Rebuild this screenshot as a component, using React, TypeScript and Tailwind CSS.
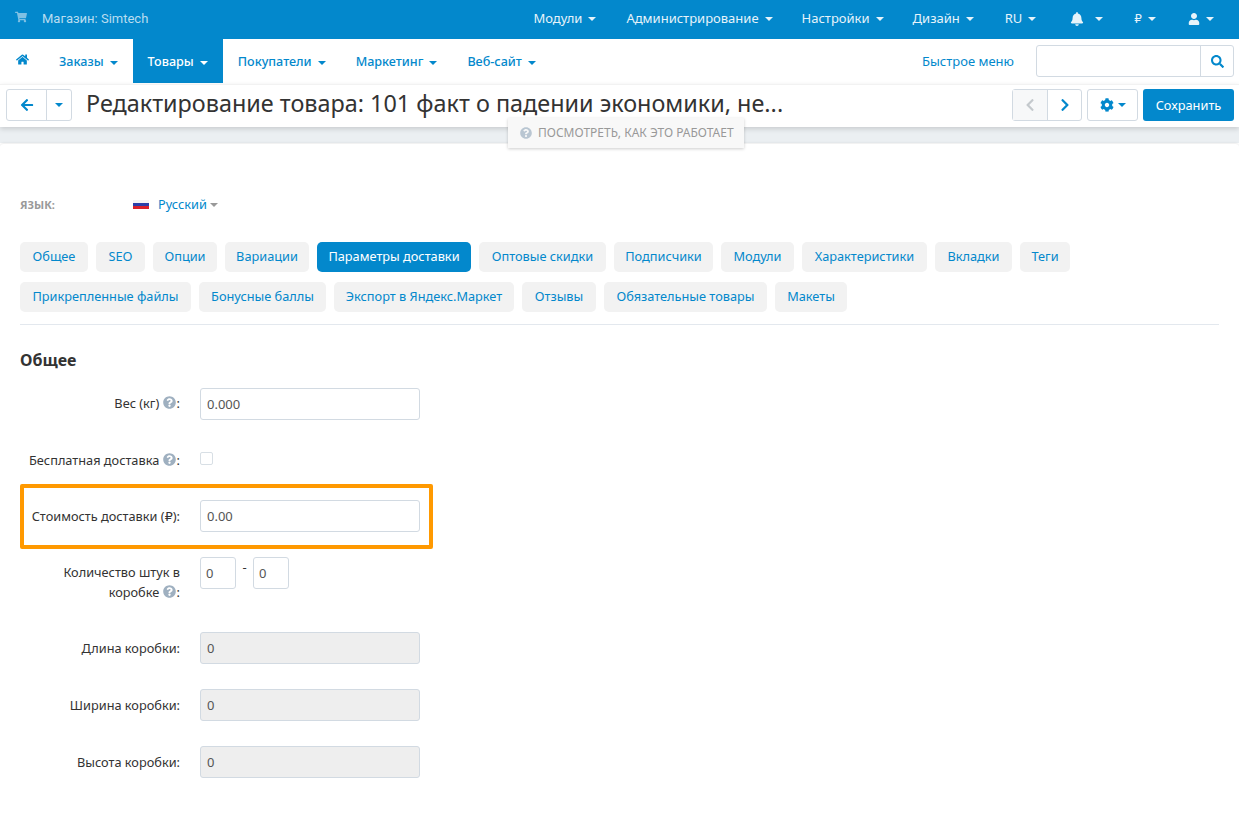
import { FaShoppingCart, FaHome, FaArrowLeft, FaChevronLeft, FaChevronRight, FaCog, FaBell, FaUser, FaSearch, FaQuestionCircle } from "react-icons/fa";

const Caret = ({ className = "" }: { className?: string }) => (
  <span className={`inline-block w-0 h-0 border-x-[4px] border-x-transparent border-t-[4px] border-t-current ${className}`} />
);

const Help = () => <FaQuestionCircle className="inline-block text-[13px] text-[#9fb0c0] align-[-1px] mr-px" />;

const topItems = [
  { t: "Модули", w: "mr-[30px]" },
  { t: "Администрирование", w: "mr-[29px]" },
  { t: "Настройки", w: "mr-[29px]" },
  { t: "Дизайн", w: "mr-[31px]" },
  { t: "RU", w: "mr-[34px]" },
];

const navItems = ["Заказы", "Товары", "Покупатели", "Маркетинг", "Веб-сайт"];

const row1 = [
  { t: "Общее", w: "w-[68px]" },
  { t: "SEO", w: "w-[49px]" },
  { t: "Опции", w: "w-[64px]" },
  { t: "Вариации", w: "w-[84px]" },
  { t: "Параметры доставки", w: "w-[154px]" },
  { t: "Оптовые скидки", w: "w-[127px]" },
  { t: "Подписчики", w: "w-[99px]" },
  { t: "Модули", w: "w-[73px]" },
  { t: "Характеристики", w: "w-[125px]" },
  { t: "Вкладки", w: "w-[77px]" },
  { t: "Теги", w: "w-[50px]" },
];
const row2 = [
  { t: "Прикрепленные файлы", w: "w-[171px]" },
  { t: "Бонусные баллы", w: "w-[127px]" },
  { t: "Экспорт в Яндекс.Маркет", w: "w-[180px]" },
  { t: "Отзывы", w: "w-[74px]" },
  { t: "Обязательные товары", w: "w-[163px]" },
  { t: "Макеты", w: "w-[72px]" },
];

const Tab = ({ t, w }: { t: string; w: string }) => (
  <div className={`h-[30px] ${w} flex items-center justify-center rounded-[5px] text-[12.75px] ${t === "Параметры доставки" ? "bg-[#0388cc] text-white" : "bg-[#f2f2f2] text-[#0388cc]"}`}>{t}</div>
);

const Label = ({ children, className = "" }: { children: React.ReactNode; className?: string }) => (
  <div className={`text-right text-[12.75px] text-[#333] ${className}`}>{children}</div>
);

const Input = ({ v, disabled }: { v: string; disabled?: boolean }) => (
  <div className={`ml-5 w-[220px] h-8 border border-[#d2dae2] rounded-[3px] px-[6px] pt-px flex items-center text-[13px] text-[#555] ${disabled ? "bg-[#eeeeee]" : "bg-white"}`}>{v}</div>
);

const Small = ({ v }: { v: string }) => (
  <div className="w-9 h-8 border border-[#d2dae2] rounded-[3px] px-[5px] pt-px flex items-center text-[13px] text-[#555] bg-white">{v}</div>
);

export default function App() {
  return (
    <div className="relative min-h-[814px] bg-white overflow-hidden font-['Noto_Sans',sans-serif] text-[#333]">
      <header className="h-[39px] bg-[#0388cc] flex items-center pl-[15px] pb-px text-[13px] text-[#e6f3fa]">
        <FaShoppingCart className="text-[12px] text-[#7fc0e3] -mt-1" />
        <span className="ml-[15px] text-[#b9ddf0] font-['Roboto',sans-serif]">Магазин: Simtech</span>
        <div className="ml-auto flex items-center">
          {topItems.map((i) => (
            <div key={i.t} className={`flex items-center gap-[6px] ${i.w}`}>
              <span>{i.t}</span>
              <Caret />
            </div>
          ))}
          <div className="flex items-center gap-[11px] mr-[31px]"><FaBell className="text-[14px]" /><Caret /></div>
          <div className="flex items-center gap-[6px] mr-[32px]"><span className="text-[12px] font-['DejaVu_Sans',sans-serif]">₽</span><Caret /></div>
          <div className="flex items-center gap-[6px] mr-[25px]"><FaUser className="text-[12px]" /><Caret /></div>
        </div>
      </header>

      <nav className="h-[45px] flex items-stretch pl-[16px] pr-[5px] text-[13px] text-[#0388cc]">
        <div className="w-[28px] flex items-center -mt-1"><FaHome className="text-[13px]" /></div>
        <div className="flex items-stretch h-[44px]">
          {navItems.map((t) => (
            <div key={t} className={`px-[15px] pt-[3px] flex items-center gap-[6px] text-[12.6px] font-medium ${t === "Товары" ? "bg-[#0388cc] text-white" : ""}`}>
              <span>{t}</span>
              <Caret />
            </div>
          ))}
        </div>
        <div className="ml-auto flex items-center pb-[1px]">
          <span className="mr-[22px] pt-[2px]">Быстрое меню</span>
          <div className="w-[198px] h-[32px] border border-[#d2dae2] rounded-[3px] flex justify-end bg-white">
            <div className="w-[33px] border-l border-[#d2dae2] flex items-center justify-center"><FaSearch className="text-[13px]" /></div>
          </div>
        </div>
      </nav>

      <div className="relative z-10 h-[43px] bg-white shadow-[0_2px_5px_rgba(0,0,0,0.15)] border-t border-[#f2f2f2] flex items-center pl-[6px] pr-[5px] pb-[2px]">
        <div className="flex h-8 border border-[#d2dae2] rounded-[3px] text-[#0388cc]">
          <div className="w-[40px] flex items-center justify-center border-r border-[#d2dae2]"><FaArrowLeft className="text-[14px]" /></div>
          <div className="w-[24px] flex items-center justify-center"><Caret /></div>
        </div>
        <h1 className="ml-[14px] -mt-[2px] text-[23.4px] text-[#333]">Редактирование товара: 101 факт о падении экономики, не...</h1>
        <div className="ml-auto flex items-center">
          <div className="flex h-8 border border-[#d2dae2] rounded-[3px]">
            <div className="w-[35px] bg-[#f7f8f9] flex items-center justify-center border-r border-[#d2dae2] text-[#c4c9cd]"><FaChevronLeft className="text-[14px]" /></div>
            <div className="w-[33px] flex items-center justify-center text-[#0388cc]"><FaChevronRight className="text-[14px]" /></div>
          </div>
          <div className="ml-[5px] w-[51px] h-8 border border-[#d2dae2] rounded-[3px] flex items-center justify-center gap-1 text-[#0388cc]"><FaCog className="text-[14px]" /><Caret /></div>
          <div className="ml-[5px] w-[91px] h-8 pt-px bg-[#0388cc] rounded-[3px] flex items-center justify-center text-[12.8px] text-white">Сохранить</div>
        </div>
      </div>

      <div className="absolute z-20 left-[508px] top-[118px] w-[236px] h-[30px] bg-[#f8f8f8] shadow-[0_1px_3px_rgba(0,0,0,0.2)] flex items-center pl-[12px] text-[12px] text-[#999]">
        <FaQuestionCircle className="text-[12px] text-[#b9c6d2] mr-[6px]" />
        ПОСМОТРЕТЬ, КАК ЭТО РАБОТАЕТ
      </div>

      <div className="h-[16px] bg-[#ebeff2]" />

      <main className="rounded-t-[4px] bg-white px-5 pt-[51px] border-t border-[#f2f2f2] shadow-[0_-1px_2px_rgba(0,0,0,0.04)]">
        <div className="flex items-center h-5 text-[11px]">
          <span className="w-[113px] font-bold text-[#999]">ЯЗЫК:</span>
          <span className="w-4 h-[9px] mr-[9px] -mt-[2px] bg-[linear-gradient(#f4f4f4_33%,#2a3ea8_33%,#2a3ea8_66%,#d8202a_66%)]" />
          <span className="text-[12.75px] text-[#0388cc]">Русский</span>
          <Caret className="ml-[3px] text-[#999]" />
        </div>

        <div className="mt-[27px] flex gap-2">{row1.map((i) => <Tab key={i.t} t={i.t} w={i.w} />)}</div>
        <div className="mt-[10px] flex gap-2">{row2.map((i) => <Tab key={i.t} t={i.t} w={i.w} />)}</div>
        <div className="mt-[12px] h-px bg-[#e3e8ee]" />

        <h2 className="mt-[24px] text-[16px] leading-[22px] font-bold text-[#333]">Общее</h2>

        <div className="mt-[17px] flex items-start">
          <Label className="w-[160px] pt-[5px] leading-[21px]">Вес (кг) <Help />:</Label>
          <Input v="0.000" />
        </div>

        <div className="mt-[32px] flex items-start">
          <Label className="w-[160px] -mt-[2px] leading-[21px]">Бесплатная доставка <Help />:</Label>
          <div className="ml-5 w-[13px] h-[13px] border border-[#d8dfe5] rounded-[2px] bg-white" />
        </div>

        <div className="mt-[13px] w-[413px] h-[65px] border-[4px] border-[#ff9900] rounded-[2px] flex items-start pl-[6px] pt-[12px]">
          <Label className="w-[150px] pt-[6px] leading-[21px] whitespace-nowrap">Стоимость доставки (<span className="font-['DejaVu_Sans',sans-serif]">₽</span>):</Label>
          <Input v="0.00" />
        </div>

        <div className="mt-[8px] flex items-start">
          <Label className="w-[160px] pt-[5px] leading-[20px]">Количество штук в коробке <Help />:</Label>
          <div className="ml-5 flex items-start">
            <Small v="0" />
            <span className="w-[17px] text-center text-[13px] leading-[20px]">-</span>
            <Small v="0" />
          </div>
        </div>

        <div className="mt-[30px] flex items-center">
          <Label className="w-[160px] leading-[21px]">Длина коробки:</Label>
          <Input v="0" disabled />
        </div>
        <div className="mt-[25px] flex items-center">
          <Label className="w-[160px] leading-[21px]">Ширина коробки:</Label>
          <Input v="0" disabled />
        </div>
        <div className="mt-[25px] flex items-center">
          <Label className="w-[160px] leading-[21px]">Высота коробки:</Label>
          <Input v="0" disabled />
        </div>
      </main>
    </div>
  );
}
